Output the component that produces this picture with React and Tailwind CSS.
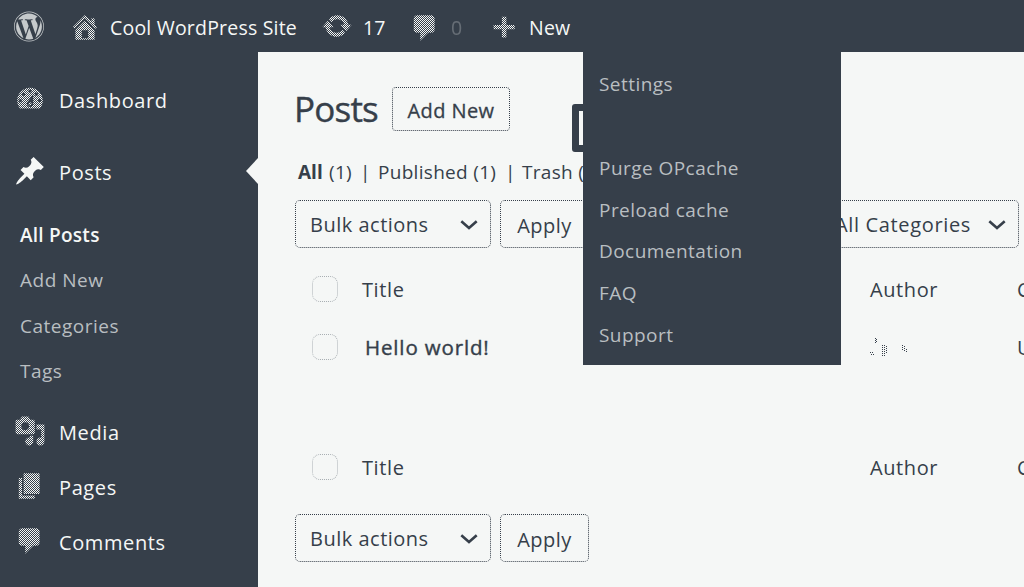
import React from "react";
import { FaWordpress } from "react-icons/fa";

const PATHS = {
  dashboard:
    "M3.76 16h12.48c1.1-1.37 1.76-3.11 1.76-5 0-4.42-3.58-8-8-8s-8 3.58-8 8c0 1.89.66 3.63 1.76 5zM10 4c.55 0 1 .45 1 1s-.45 1-1 1-1-.45-1-1 .45-1 1-1zM6 6c.55 0 1 .45 1 1s-.45 1-1 1-1-.45-1-1 .45-1 1-1zm8 0c.55 0 1 .45 1 1s-.45 1-1 1-1-.45-1-1 .45-1 1-1zm-5.37 5.55L12 7v6c0 1.1-.9 2-2 2s-2-.9-2-2c0-.57.24-1.08.63-1.45zM4 10c.55 0 1 .45 1 1s-.45 1-1 1-1-.45-1-1 .45-1 1-1zm12 0c.55 0 1 .45 1 1s-.45 1-1 1-1-.45-1-1 .45-1 1-1zm-5 3c0-.55-.45-1-1-1s-1 .45-1 1 .45 1 1 1 1-.45 1-1z",
  post: "M10.44 3.02l1.82-1.82 6.36 6.35-1.83 1.82c-1.05-.68-2.48-.57-3.41.36l-.75.75c-.92.93-1.04 2.35-.35 3.41l-1.83 1.82-2.41-2.41-2.8 2.79c-.42.42-3.38 2.71-3.8 2.29s1.86-3.39 2.28-3.81l2.79-2.79L4.1 9.36l1.83-1.82c1.05.69 2.48.57 3.4-.36l.75-.75c.93-.92 1.05-2.35.36-3.41z",
  comments:
    "M5 2h9c1.1 0 2 .9 2 2v7c0 1.1-.9 2-2 2h-2l-5 5v-5H5c-1.1 0-2-.9-2-2V4c0-1.1.9-2 2-2z",
  home: "M16 8.5l1.53 1.53-1.06 1.06L10 4.6l-6.47 6.49-1.06-1.06L10 2.5l4 4v-2h2v4zm-6-2.46l6 5.99V18H4v-5.97zM12 17v-5H8v5h4z",
  page: "M6 15V2h10v13H6zm-1 1h8v2H3V5h2v11z",
  update:
    "M10.2 3.28c3.53 0 6.43 2.61 6.92 6h2.08l-3.5 4-3.5-4h2.32c-.45-1.97-2.21-3.45-4.32-3.45-1.45 0-2.73.71-3.54 1.78L4.95 5.66C6.23 4.2 8.11 3.28 10.2 3.28zm-.4 13.44c-3.52 0-6.43-2.61-6.92-6H.8l3.5-4c1.17 1.33 2.33 2.67 3.5 4H5.48c.45 1.97 2.21 3.45 4.32 3.45 1.45 0 2.73-.71 3.54-1.78l1.71 1.95c-1.28 1.46-3.15 2.38-5.25 2.38z",
  media:
    "M13 11V4c0-.55-.45-1-1-1h-1.67L9 1H5L3.67 3H2c-.55 0-1 .45-1 1v7c0 .55.45 1 1 1h10c.55 0 1-.45 1-1zM7 4.5c1.38 0 2.5 1.12 2.5 2.5S8.38 9.5 7 9.5 4.5 8.38 4.5 7 5.62 4.5 7 4.5zM14 6h5v10.5c0 1.38-1.12 2.5-2.5 2.5S14 17.88 14 16.5s1.12-2.5 2.5-2.5c.17 0 .34.02.5.05V9h-3V6zm-4 8.05V13h2v3.5c0 1.38-1.12 2.5-2.5 2.5S7 17.88 7 16.5 8.12 14 9.5 14c.17 0 .34.02.5.05z",
  plus: "M8.7 3.6h2.8v5.2h5.2v2.6h-5.2v5.2H8.7v-5.2H3.5V8.8h5.2z",
};

const STIPPLE =
  "[mask-image:repeating-conic-gradient(#000_0_25%,transparent_0_50%)] [mask-size:2px_2px]";

function Icon({ name, solid, className = "" }) {
  return (
    <svg
      viewBox="0 0 20 20"
      fill="currentColor"
      className={`h-8 w-8 shrink-0 ${solid ? "" : STIPPLE} ${className}`}
    >
      <path d={PATHS[name]} fillRule="evenodd" />
    </svg>
  );
}

function TopBar() {
  return (
    <header className="flex h-[52px] shrink-0 items-center bg-[#363f4a] pb-px pl-[13px] text-[19.5px] leading-7 tracking-[0.2px] text-[#f5f7f6]">
      <FaWordpress className="mt-0.5 h-[31px] w-8 shrink-0 opacity-75" />
      <Icon name="home" className="ml-6 mt-0.5" />
      <span className="ml-[9px] mt-[5px] w-[188px] whitespace-nowrap">Cool WordPress Site</span>
      <Icon name="update" className="ml-[23px] mt-px" />
      <span className="ml-[10px] mt-[5px] w-[21px]">17</span>
      <Icon name="comments" className="ml-[25px] mt-[5px]" />
      <span className="ml-[10px] mt-[5px] w-[11px] opacity-25">0</span>
      <Icon name="plus" className="ml-[26px] mt-[3px]" />
      <span className="ml-[9px] mt-[5px]">New</span>
    </header>
  );
}

function NavItem({ icon, label, active, className = "" }) {
  return (
    <div className={`relative flex h-[55px] shrink-0 items-center pl-[14px] ${className}`}>
      <Icon name={icon} solid={active} className="-mt-px" />
      <span className="ml-[13px] mt-0.5 text-[20px] leading-7 tracking-[0.6px]">{label}</span>
      {active && (
        <svg viewBox="0 0 12 26" className="absolute right-0 top-[14px] h-[26px] w-3" fill="#f5f7f6">
          <path d="M12 0v26L0 13z" />
        </svg>
      )}
    </div>
  );
}

function Sidebar() {
  return (
    <nav className="flex w-[258px] shrink-0 flex-col bg-[#363f4a] pt-5 text-[#f5f7f6]">
      <NavItem icon="dashboard" label="Dashboard" />
      <NavItem icon="post" label="Posts" active className="mt-[17px]" />
      <div className="mb-2.5 mt-3.5 flex flex-col pl-5 text-[19px] leading-[45.25px] tracking-[0.5px] text-[#b9bec1]">
        <span className="font-semibold tracking-[0.25px] text-[#f5f7f6]">All Posts</span>
        <span>Add New</span>
        <span>Categories</span>
        <span>Tags</span>
      </div>
      <NavItem icon="media" label="Media" />
      <NavItem icon="page" label="Pages" />
      <NavItem icon="comments" label="Comments" />
    </nav>
  );
}

function Chevron() {
  return (
    <svg viewBox="0 0 18 10" className="mt-0.5 h-[10px] w-[18px] shrink-0" fill="none" stroke="#363f4a" strokeWidth="2.6">
      <path d="M1.3 1.2 9 8l7.7-6.8" />
    </svg>
  );
}

function BulkActions() {
  return (
    <div className="flex h-12 shrink-0 text-[20px] tracking-[0.5px]">
      <div className="flex w-[196px] items-center justify-between rounded-[5px] border border-dotted border-[#363f4a] pl-[14px] pr-[12px]">
        <span className="mt-px">Bulk actions</span>
        <Chevron />
      </div>
      <div className="ml-[9px] flex w-[89px] items-center justify-center rounded-[5px] border border-dotted border-[#363f4a]">
        <span className="mt-[3px]">Apply</span>
      </div>
    </div>
  );
}

function Checkbox() {
  return (
    <span className="ml-[54px] h-[26px] w-[26px] shrink-0 rounded-[8px] border border-dotted border-[#a9afb3]" />
  );
}

function HeadRow({ className }) {
  return (
    <div className={`flex h-[30px] shrink-0 items-center text-[20px] tracking-[0.6px] ${className}`}>
      <Checkbox />
      <span className="ml-6 mt-0.5 w-[508px] shrink-0">Title</span>
      <span className="mt-0.5 w-[147px] shrink-0">Author</span>
      <span className="mt-0.5 whitespace-nowrap">Comments</span>
    </div>
  );
}

function AuthorMark() {
  return (
    <svg viewBox="0 0 40 20" className="h-5 w-10" fill="none" stroke="#363f4a" strokeDasharray="1 1">
      <path d="M5.5 1v5M6.5 2v3M0 15.500h4M1 17.500h3M12.500 8v11M14.500 8v11M16.500 9v8M32.500 8v5M34.500 9v6M36.500 12v3" />
    </svg>
  );
}

function Main() {
  return (
    <main className="flex min-w-0 flex-1 flex-col overflow-hidden bg-[#f5f7f6] text-[#363f4a]">
      <div className="mt-[34px] flex h-[46px] shrink-0 items-center pl-[37px]">
        <h1 className="-ml-px w-[98px] text-[35px] leading-[46px] tracking-[-0.8px] [-webkit-text-stroke:0.4px_#363f4a]">Posts</h1>
        <div className="flex h-11 w-[118px] shrink-0 items-center justify-center rounded-[4px] border border-dotted border-[#363f4a] text-[20px] tracking-[0.4px] [-webkit-text-stroke:0.3px_#363f4a]">
          <span className="mt-[3px]">Add New</span>
        </div>
        <div className="ml-[62px] mt-[38px] h-12 w-40 shrink-0 rounded-[3px] border-[7px] border-[#363f4a]" />
      </div>
      <div className="mt-[26px] flex h-7 shrink-0 items-center whitespace-nowrap pl-10 text-[19px] tracking-[0.3px]">
        <b className="w-[31px] tracking-normal">All</b>
        <span className="w-[31px]">(1)</span>
        <span className="w-[18px]">|</span>
        <span className="w-[127px]">Published (1)</span>
        <span className="w-[17px]">|</span>
        <span>Trash (1)</span>
      </div>
      <div className="mt-[14px] flex shrink-0 items-center justify-between pl-[37px] pr-[5px]">
        <BulkActions />
        <div className="flex h-12 w-[198px] items-center justify-between whitespace-nowrap rounded-[5px] border border-dotted border-[#363f4a] pl-[13px] pr-[12px] text-[20px] tracking-[0.65px]">
          <span className="mt-px">All Categories</span>
          <Chevron />
        </div>
      </div>
      <HeadRow className="mt-[26px]" />
      <div className="mt-7 flex h-[30px] shrink-0 items-center text-[20px] tracking-[0.5px]">
        <Checkbox />
        <span className="ml-[27px] w-[505px] shrink-0 text-[20.5px] tracking-[0.85px] [-webkit-text-stroke:0.4px_#363f4a]">Hello world!</span>
        <span className="w-[147px] shrink-0">
          <AuthorMark />
        </span>
        <span className="mt-0.5 whitespace-nowrap">Uncategorized</span>
      </div>
      <HeadRow className="mt-[90px]" />
      <div className="mt-[32px] flex shrink-0 pl-[37px]">
        <BulkActions />
      </div>
    </main>
  );
}

function CacheMenu() {
  return (
    <div className="absolute left-[583px] top-[52px] flex h-[313px] w-[258px] flex-col bg-[#363f4a] pl-4 pt-3 text-[19px] leading-[41.8px] tracking-[0.45px] text-[#b9bec1]">
      <span className="mb-[42px]">Settings</span>
      <span>Purge OPcache</span>
      <span>Preload cache</span>
      <span>Documentation</span>
      <span>FAQ</span>
      <span>Support</span>
    </div>
  );
}

export default function App() {
  return (
    <div className="relative flex h-[587px] w-[1024px] flex-col overflow-hidden bg-[#363f4a] font-['Open_Sans','Noto_Sans',sans-serif]">
      <TopBar />
      <div className="flex min-h-0 flex-1">
        <Sidebar />
        <Main />
      </div>
      <CacheMenu />
    </div>
  );
}
